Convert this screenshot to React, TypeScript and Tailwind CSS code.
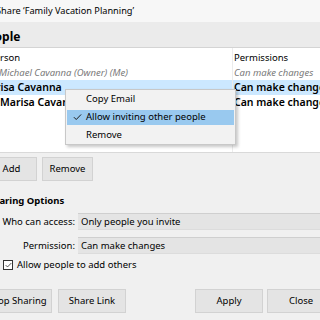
function Btn({ label, className }: { label: string; className: string }) {
  return (
    <div
      className={`h-[24px] flex items-center justify-center bg-[#e4e4e4] border border-[#d2d2d2] text-[9.5px] shrink-0 ${className}`}
    >
      {label}
    </div>
  );
}

function Check({ className }: { className: string }) {
  return (
    <svg viewBox="0 0 10 8" className={className} fill="none">
      <path d="M1 4.2 L3.6 6.8 L9 1.2" stroke="currentColor" strokeWidth="1.1" />
    </svg>
  );
}

function ContextMenu() {
  return (
    <div className="absolute left-[85px] top-[89px] w-[171px] bg-[#f2f2f2] border border-[#c8c8c8] shadow-[2px_2px_3px_rgba(0,0,0,0.22)] text-[9.5px]">
      <div className="h-[18px] flex items-center pl-[20px]">Copy Email</div>
      <div className="h-[18px] flex items-center">
        <div className="h-[15px] flex-1 mx-[1px] flex items-center bg-[#99c9ef]">
          <Check className="w-[9px] h-[8px] ml-[6px] mr-[4px] text-[#1a1a1a]" />
          <span>Allow inviting other people</span>
        </div>
      </div>
      <div className="h-[18px] flex items-center pl-[20px]">Remove</div>
    </div>
  );
}

export default function App() {
  return (
    <div className="w-[320px] h-[320px] overflow-hidden bg-[#f0f0f0] text-black text-[9.5px] font-['Noto_Sans',sans-serif] leading-none">
      <div className="ml-[-20px] w-[380px] relative">
        <div className="h-[22px] bg-[#f7f7f7] pl-[16px] flex items-center text-[9.2px]">
          Share ‘Family Vacation Planning’
        </div>

        <div className="h-[26px] bg-[#ebebeb] border-b border-[#d4d4d4] pl-0 flex items-center pt-[4px] text-[12px] font-bold">
          People
        </div>

        <div className="bg-white h-[105px] border-b border-[#d9d9d9] pt-[2px] relative">
          <div className="absolute left-[252px] top-0 bottom-0 w-px bg-[#ececec]" />
          <div className="h-[15px] flex items-center">
            <span className="pl-[9px] w-[254px]">Person</span>
            <span>Permissions</span>
          </div>
          <div className="h-[15px] flex items-center italic text-[#7a7a7a]">
            <span className="pl-[19px] w-[254px]">Michael Cavanna (Owner) (Me)</span>
            <span>Can make changes</span>
          </div>
          <div className="h-[15px] flex items-center bg-[#cce8ff] text-[10.5px] font-semibold">
            <span className="pl-0 w-[254px]">Marisa Cavanna</span>
            <span>Can make changes</span>
          </div>
          <div className="h-[15px] flex items-center text-[10.5px] font-semibold">
            <span className="pl-[20px] w-[254px]">Marisa Cavanna</span>
            <span>Can make changes</span>
          </div>
        </div>

        <div className="flex gap-[5px] pl-[6px] pt-[4px]">
          <Btn label="Add" className="w-[51px] h-[21px]" />
          <Btn label="Remove" className="w-[51px] h-[21px]" />
        </div>

        <div className="pl-[8px] mt-[13px] h-[14px] flex items-center text-[9.5px] font-bold">
          Sharing Options
        </div>

        <div className="flex flex-col gap-[7px] mt-[5px]">
          <div className="flex items-center gap-[3px]">
            <span className="w-[95px] text-right">Who can access:</span>
            <div className="h-[17px] flex-1 bg-[#e4e4e4] border-t border-[#cfcfcf] border-b border-b-[#dcdcdc] pl-[3px] flex items-center">
              Only people you invite
            </div>
          </div>
          <div className="flex items-center gap-[3px]">
            <span className="w-[95px] text-right">Permission:</span>
            <div className="h-[17px] flex-1 bg-[#e4e4e4] border-t border-[#cfcfcf] border-b border-b-[#dcdcdc] pl-[3px] flex items-center">
              Can make changes
            </div>
          </div>
        </div>

        <div className="flex items-center pl-[23px] mt-[5px] h-[11px] gap-[4px]">
          <div className="w-[10px] h-[10px] bg-white border border-[#333] flex items-center justify-center">
            <Check className="w-[7px] h-[6px] text-[#222]" />
          </div>
          <span>Allow people to add others</span>
        </div>

        <div className="flex pl-[4px] mt-[19px]">
          <Btn label="Stop Sharing" className="w-[68px]" />
          <Btn label="Share Link" className="w-[68px] ml-[6px]" />
          <Btn label="Apply" className="w-[68px] ml-[69px]" />
          <Btn label="Close" className="w-[68px] ml-[4px]" />
        </div>

        <ContextMenu />
      </div>
    </div>
  );
}
